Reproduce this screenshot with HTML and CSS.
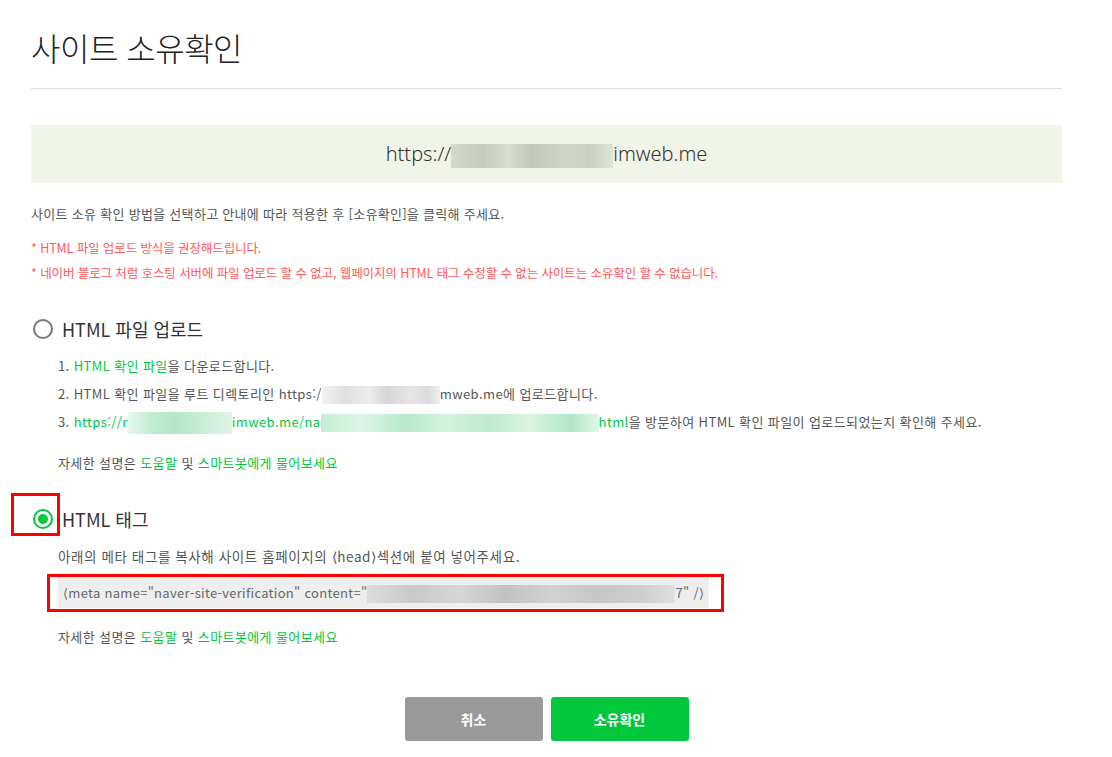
FILE: index.html
```html
<!DOCTYPE html>
<html lang="ko">
<head>
    <meta charset="UTF-8">
    <meta name="viewport" content="width=device-width, initial-scale=1.0">
    <title>사이트 소유확인</title>
    <link rel="stylesheet" href="styles.css">
</head>
<body>
    <div class="container">
        <h1>사이트 소유확인</h1>
        <hr class="divider">

        <div class="site-url">https://<span class="blur blur-url"></span>imweb.me</div>

        <p class="desc">사이트 소유 확인 방법을 선택하고 안내에 따라 적용한 후 [소유확인]을 클릭해 주세요.</p>
        <div class="notice">
            <p>* HTML 파일 업로드 방식을 권장해드립니다.</p>
            <p>* 네이버 블로그 처럼 호스팅 서버에 파일 업로드 할 수 없고, 웹페이지의 HTML 태그 수정할 수 없는 사이트는 소유확인 할 수 없습니다.</p>
        </div>

        <!-- method 1 -->
        <div class="method method-file">
            <label class="radio-row">
                <span class="radio-wrap"><span class="radio"></span></span>
                <span class="radio-label">HTML 파일 업로드</span>
            </label>
            <ol class="steps">
                <li>1. <a href="#" class="link">HTML 확인 파일</a>을 다운로드합니다.</li>
                <li>2. HTML 확인 파일을 루트 디렉토리인 https:/<span class="blur blur-gray"></span>mweb.me에 업로드합니다.</li>
                <li>3. <a href="#" class="link">https://r<span class="blur blur-green1"></span>imweb.me/na<span class="blur blur-green2"></span>html</a>을 방문하여 HTML 확인 파일이 업로드되었는지 확인해 주세요.</li>
            </ol>
            <p class="help">자세한 설명은 <a href="#" class="link">도움말</a> 및 <a href="#" class="link">스마트봇에게 물어보세요</a></p>
        </div>

        <!-- method 2 -->
        <div class="method method-tag">
            <label class="radio-row">
                <span class="radio-wrap marked"><span class="radio checked"></span></span>
                <span class="radio-label">HTML 태그</span>
            </label>
            <p class="tag-desc">아래의 메타 태그를 복사해 사이트 홈페이지의 ⟨head⟩섹션에 붙여 넣어주세요.</p>
            <div class="code-mark">
                <div class="code">⟨meta name="naver-site-verification" content="<span class="blur blur-code"></span>7" /⟩</div>
            </div>
            <p class="help">자세한 설명은 <a href="#" class="link">도움말</a> 및 <a href="#" class="link">스마트봇에게 물어보세요</a></p>
        </div>

        <div class="buttons">
            <button type="button" class="btn btn-cancel">취소</button>
            <button type="button" class="btn btn-ok">소유확인</button>
        </div>
    </div>
</body>
</html>
```

FILE: styles.css
```css
body {
    margin: 0;
    padding: 0;
    background: #fff;
    color: #555;
    font-family: "Noto Sans CJK KR", "Noto Sans", sans-serif;
}
.container {
    width: 1031px;
    padding: 0 0 0 31px;
}
h1 {
    margin: 0;
    padding-top: 26px;
    font-size: 32px;
    line-height: 42px;
    font-weight: 300;
    color: #222;
    letter-spacing: -0.5px;
}
.divider {
    margin: 20px 0 0;
    border: 0;
    border-top: 1px solid #ddd;
}
.site-url {
    margin-top: 36px;
    height: 58px;
    line-height: 58px;
    background: #f0f5e8;
    text-align: center;
    font-size: 20px;
    color: #333;
    font-family: "Noto Sans", "Noto Sans CJK KR", sans-serif;
    font-weight: 300;
}
.blur {
    display: inline-block;
    vertical-align: middle;
}
.blur-url {
    width: 162px;
    height: 24px;
    background: linear-gradient(90deg, #d4d9cc 0, #c6ccbe 20%, #d8ddd0 35%, #c2c8ba 50%, #d0d5c8 70%, #c9cfc1 85%, #dfe4d8 100%);
}
.desc {
    margin: 21px 0 0;
    font-size: 13px;
    line-height: 20px;
    color: #555;
    letter-spacing: 0.3px;
}
.notice {
    margin-top: 11px;
}
.notice p {
    margin: 0;
    font-size: 12.5px;
    line-height: 25px;
    color: #ff5a5a;
    letter-spacing: -0.1px;
}
.method {
    font-size: 13px;
    color: #555;
    letter-spacing: 0.4px;
}
.method-file {
    margin-top: 29px;
}
.method-tag {
    margin-top: 31px;
}
.radio-row {
    display: flex;
    align-items: center;
    height: 30px;
    cursor: pointer;
    letter-spacing: 0;
}
.radio-wrap {
    position: relative;
    display: flex;
    align-items: center;
    margin: 0 9px 0 2px;
}
.radio-wrap.marked::before {
    content: "";
    position: absolute;
    left: -22px;
    top: -16px;
    width: 43px;
    height: 37px;
    border: 3px solid #f00;
}
.radio {
    width: 16px;
    height: 16px;
    border: 2px solid #777;
    border-radius: 50%;
    box-sizing: content-box;
}
.radio.checked {
    position: relative;
    border-color: #00c73c;
}
.radio.checked::after {
    content: "";
    position: absolute;
    left: 3px;
    top: 3px;
    width: 10px;
    height: 10px;
    border-radius: 50%;
    background: #00c73c;
}
.radio-label {
    font-size: 18px;
    color: #333;
}
.steps {
    list-style: none;
    margin: 8px 0 0;
    padding: 0 0 0 27px;
}
.steps li {
    line-height: 28px;
    white-space: nowrap;
}
.link {
    color: #00c73c;
    text-decoration: none;
}
.blur-gray {
    width: 118px;
    height: 18px;
    background: linear-gradient(90deg, #f2f2f2 0, #e0e0e0 20%, #ececec 40%, #d6d6d6 55%, #e6e6e6 75%, #dcdcdc 90%, #f0f0f0 100%);
}
.blur-green1 {
    width: 104px;
    height: 22px;
    background: linear-gradient(90deg, #e8f8ee 0, #c0ebcf 25%, #b4e6c5 45%, #c8eed5 70%, #dff5e7 100%);
}
.blur-green2 {
    width: 278px;
    height: 18px;
    background: linear-gradient(90deg, #c6eed4 0, #dcf5e4 15%, #b9e9c9 30%, #d3f2de 45%, #bfeacd 60%, #d9f4e2 75%, #b2e6c3 90%, #e3f7ea 100%);
}
.help {
    margin: 17px 0 0 27px;
    line-height: 20px;
}
.tag-desc {
    margin: 12px 0 0 27px;
    line-height: 20px;
    font-size: 13.5px;
    letter-spacing: 0.6px;
}
.code-mark {
    display: inline-block;
    margin: 8px 0 0 16px;
    padding: 0 12px 1px 8px;
    border: 3px solid #f00;
}
.code {
    width: 651px;
    box-sizing: border-box;
    height: 31px;
    line-height: 31px;
    padding-left: 5px;
    background: #eee;
    color: #666;
    font-size: 13px;
    white-space: nowrap;
    letter-spacing: 0.3px;
}
.blur-code {
    width: 308px;
    height: 18px;
    background: linear-gradient(90deg, #dcdcdc 0, #c9c9c9 15%, #d6d6d6 30%, #c2c2c2 45%, #d2d2d2 60%, #c6c6c6 75%, #cfcfcf 90%, #e0e0e0 100%);
}
.method-tag .help {
    margin-top: 15px;
}
.buttons {
    display: flex;
    justify-content: center;
    gap: 8px;
    margin-top: 50px;
}
.btn {
    width: 138px;
    height: 44px;
    border: none;
    border-radius: 3px;
    color: #fff;
    font-family: "Noto Sans CJK KR", sans-serif;
    font-size: 14px;
    font-weight: bold;
    cursor: pointer;
}
.btn-cancel {
    background: #999;
}
.btn-ok {
    background: #00c73c;
}
```
